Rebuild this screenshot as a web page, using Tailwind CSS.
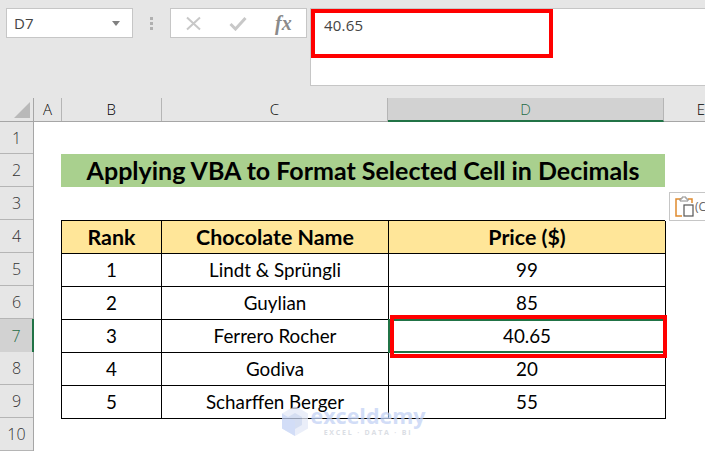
<!DOCTYPE html>
<html lang="en">

<head>
    <meta charset="UTF-8">
    <title>Applying VBA to Format Selected Cell in Decimals</title>
    <script src="https://cdn.jsdelivr.net/npm/@tailwindcss/browser@4"></script>
</head>

<body class="bg-white w-[705px] h-[452px] overflow-hidden relative font-['Lato',sans-serif]">

    <!-- Formula bar -->
    <div class="h-[98px] bg-[#e6e6e6] flex items-start pt-2 pl-1.5">
        <div class="w-[127px] h-[30px] bg-white border border-[#c6c6c6] flex items-center justify-between pl-[7px] pr-3 text-[15px] text-[#444] font-['Open_Sans',sans-serif]">
            <span>D7</span>
            <svg width="8" height="5" viewBox="0 0 8 5"><path d="M0 0h8L4 5z" fill="#808080"/></svg>
        </div>
        <div class="w-[37px] h-[30px] flex flex-col items-center justify-center gap-[2px]">
            <i class="block w-[3px] h-[3px] bg-[#b0b0b0]"></i>
            <i class="block w-[3px] h-[3px] bg-[#b0b0b0]"></i>
            <i class="block w-[3px] h-[3px] bg-[#b0b0b0]"></i>
        </div>
        <div class="w-[137px] h-[30px] bg-white border border-[#c6c6c6] flex items-center pl-[14px]">
            <svg width="17" height="15" viewBox="0 0 17 15"><path d="M2 1.500l13 12M15 1.500l-13 12" stroke="#c8c8c8" stroke-width="2" fill="none"/></svg>
            <svg class="ml-[27px]" width="18" height="15" viewBox="0 0 18 15"><path d="M1.500 8l5 5L16.500 2" stroke="#c8c8c8" stroke-width="3" fill="none"/></svg>
            <span class="ml-[28px] text-[20px] leading-none italic font-bold text-[#8a8a8a] font-['Liberation_Serif',serif]">fx</span>
        </div>
        <div class="ml-[3px] flex-1 h-[78px] bg-white border border-[#c6c6c6] border-r-0 pl-[13px] pt-[5px] text-[15px] tracking-[0.2px] text-[#444] font-['Open_Sans',sans-serif]">40.65</div>
    </div>

    <!-- Column headers -->
    <div class="h-6 bg-[#e6e6e6] flex text-[15px] text-black font-['Open_Sans',sans-serif] font-light border-b border-[#a6a6a6]">
        <div class="w-[34px] border-r border-[#a6a6a6] relative">
            <svg class="absolute right-[3px] bottom-[3px]" width="16" height="16" viewBox="0 0 16 16"><path d="M16 0v16H0z" fill="#b9b9b9"/></svg>
        </div>
        <div class="w-7 flex items-center justify-center border-r border-[#b5b5b5]">A</div>
        <div class="w-[100px] flex items-center justify-center border-r border-[#b5b5b5]">B</div>
        <div class="w-[227px] flex items-center justify-center border-r border-[#b5b5b5]">C</div>
        <div class="w-[276px] h-6 flex items-center justify-center bg-[#d2d2d2] text-[#1f6b45] border-r border-[#b5b5b5] border-b-2 border-b-[#217346]">D</div>
        <div class="flex-1 flex items-center pl-[33px]">E</div>
    </div>

    <div class="flex">
        <!-- Row headers -->
        <div class="w-[34px] bg-[#e6e6e6] border-r border-[#a6a6a6] text-[16px] text-[#333] font-['Open_Sans',sans-serif] font-light">
            <div class="h-8 flex items-center justify-center border-b border-[#b5b5b5]">1</div>
            <div class="h-[33px] flex items-center justify-center border-b border-[#b5b5b5]">2</div>
            <div class="h-[33px] flex items-center justify-center border-b border-[#b5b5b5]">3</div>
            <div class="h-[33px] flex items-center justify-center border-b border-[#b5b5b5]">4</div>
            <div class="h-[33px] flex items-center justify-center border-b border-[#b5b5b5]">5</div>
            <div class="h-[33px] flex items-center justify-center border-b border-[#b5b5b5]">6</div>
            <div class="h-[33px] flex items-center justify-center bg-[#d2d2d2] text-[#1f6b45] border-r-2 border-[#217346] -mr-px">7</div>
            <div class="h-[33px] flex items-center justify-center border-b border-[#b5b5b5]">8</div>
            <div class="h-[33px] flex items-center justify-center border-b border-[#b5b5b5]">9</div>
            <div class="h-[33px] flex items-center justify-center border-b border-[#b5b5b5]">10</div>
        </div>

        <!-- Sheet -->
        <div class="pl-[27px] pt-8 text-black">
            <div class="w-[604px] h-[33px] bg-[#a9d08e] flex items-center justify-center text-[25px] font-bold">Applying VBA to Format Selected Cell in Decimals</div>
            <div class="mt-[33px] w-[604px] grid grid-cols-[100px_227px_277px] border-t border-l border-black text-[18.8px] text-center">
                <div class="h-[33px] flex items-center justify-center bg-[#ffe699] border-r border-b border-black text-[21.4px] font-bold">Rank</div>
                <div class="h-[33px] flex items-center justify-center bg-[#ffe699] border-r border-b border-black text-[21.4px] font-bold">Chocolate Name</div>
                <div class="h-[33px] flex items-center justify-center bg-[#ffe699] border-r border-b border-black text-[21.4px] font-bold">Price ($)</div>

                <div class="h-[33px] flex items-center justify-center border-r border-b border-black">1</div>
                <div class="h-[33px] flex items-center justify-center border-r border-b border-black">Lindt &amp; Sprüngli</div>
                <div class="h-[33px] flex items-center justify-center border-r border-b border-black">99</div>

                <div class="h-[33px] flex items-center justify-center border-r border-b border-black">2</div>
                <div class="h-[33px] flex items-center justify-center border-r border-b border-black">Guylian</div>
                <div class="h-[33px] flex items-center justify-center border-r border-b border-black">85</div>

                <div class="h-[33px] flex items-center justify-center border-r border-b border-black">3</div>
                <div class="h-[33px] flex items-center justify-center border-r border-b border-black">Ferrero Rocher</div>
                <div class="h-[33px] flex items-center justify-center border-r border-b border-black">40.65</div>

                <div class="h-[33px] flex items-center justify-center border-r border-b border-black">4</div>
                <div class="h-[33px] flex items-center justify-center border-r border-b border-black">Godiva</div>
                <div class="h-[33px] flex items-center justify-center border-r border-b border-black">20</div>

                <div class="h-[33px] flex items-center justify-center border-r border-b border-black">5</div>
                <div class="h-[33px] flex items-center justify-center border-r border-b border-black">Scharffen Berger</div>
                <div class="h-[33px] flex items-center justify-center border-r border-b border-black">55</div>
            </div>
        </div>
    </div>

    <!-- Annotations and overlays -->
    <div class="absolute left-[311px] top-[9px] w-[242px] h-[49px] border-4 border-[#ff0000]"></div>
    <div class="absolute left-[388px] top-[319px] w-[277px] h-[34px] border-2 border-[#217346]"></div>
    <div class="absolute left-[390px] top-[315px] w-[277px] h-[43px] border-4 border-[#ff0000]"></div>

    <div class="absolute left-[669px] top-[192px] w-[40px] h-[29px] bg-white border border-[#c6c6c6] flex items-center pl-[5px] text-[12px] text-[#666] font-['Open_Sans',sans-serif]">
        <svg width="19" height="21" viewBox="0 0 19 21">
            <path d="M6 3H1v17h6" fill="none" stroke="#e08a2e" stroke-width="1.500"/>
            <path d="M13 3h4v4" fill="none" stroke="#e08a2e" stroke-width="1.500"/>
            <path d="M5 5V3h2V1h4v2h2v2z" fill="#fff" stroke="#8a8a8a"/>
            <rect x="9" y="9" width="9" height="11" fill="#fff" stroke="#555" stroke-width="1.200"/>
        </svg>
        <span class="ml-px">(C</span>
    </div>

    <div class="absolute left-[281px] top-[405px] flex opacity-75">
        <svg width="28" height="31" viewBox="0 0 28 31">
            <path d="M14 1l13 7.500v15L14 31 1 23.500v-15z" fill="#e3e9f7"/>
            <path d="M14 8l7 4v8l-7 4-7-4v-8z" fill="#c7d3ee"/>
            <path d="M1 8.500L14 16v15L1 23.500z" fill="#c3d2f5"/>
        </svg>
        <div class="ml-[4px] w-[110px] flex flex-col items-center">
            <span class="text-[21.5px] leading-[21px] font-bold text-[#c3d2f5] font-['Open_Sans',sans-serif]">exceldemy</span>
            <span class="text-[7px] leading-[9px] mt-[2px] font-bold tracking-[1.800px] text-[#cfd4dc] font-['Open_Sans',sans-serif]">EXCEL · DATA · BI</span>
        </div>
    </div>

</body>

</html>
